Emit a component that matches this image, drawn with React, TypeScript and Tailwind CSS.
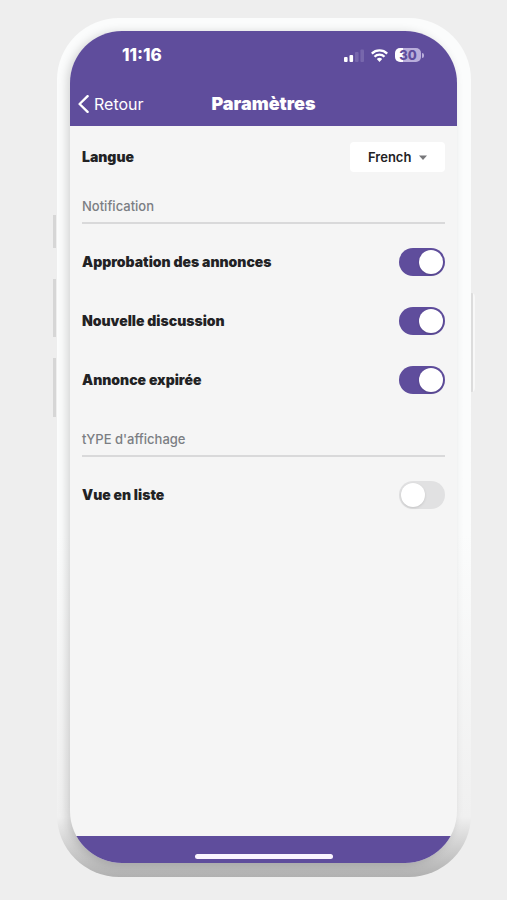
import { useState } from "react";

function StatusIcons() {
  return (
    <div className="flex items-center gap-[7px]" aria-label="Batterie 30">
      <svg width="20" height="13" viewBox="0 0 20 13" aria-hidden="true">
        <rect x="0" y="8" width="3.6" height="5" rx="1" fill="#fff" />
        <rect x="5.5" y="6" width="3.6" height="7" rx="1" fill="#fff" />
        <rect x="11" y="3" width="3.6" height="10" rx="1" fill="#7767ac" />
        <rect x="16.4" y="0.5" width="3.6" height="12.5" rx="1" fill="#7767ac" />
      </svg>
      <svg width="17" height="13" viewBox="0 0 17 13" aria-hidden="true">
        <g fill="none" stroke="#fff" strokeWidth="2.3">
          <path d="M0.8 4.6a11 11 0 0 1 15.4 0" />
          <path d="M3.5 7.7a7 7 0 0 1 10 0" />
        </g>
        <path d="M5.8 10.1a3.9 3.9 0 0 1 5.4 0L8.5 13z" fill="#fff" />
      </svg>
      <div className="flex items-center gap-px">
        <div className="flex h-[14px] w-[26px] items-center justify-center rounded-[5px] bg-linear-to-r from-white from-30% to-[#b9aedb] to-30% text-[13px] leading-[14px] font-extrabold text-[#5f4d9c]">
          30
        </div>
        <div className="h-[5px] w-[2px] rounded-r-full bg-[#b9aedb]" />
      </div>
    </div>
  );
}

function SectionHeading({ children }: { children: string }) {
  return (
    <h2 className="border-b-2 border-[#d9d9da] pb-[6px] text-[13px] leading-5 font-medium text-[#7b7e83]">
      {children}
    </h2>
  );
}

function ToggleRow({ id, label, initial }: { id: string; label: string; initial: boolean }) {
  const [on, setOn] = useState(initial);
  return (
    <div className="flex h-[59px] items-center justify-between">
      <label htmlFor={id} className="text-[14px] leading-5 font-black">
        {label}
      </label>
      <input
        id={id}
        type="checkbox"
        role="switch"
        checked={on}
        onChange={(e) => setOn(e.target.checked)}
        className="flex h-7 w-[46px] shrink-0 cursor-pointer appearance-none items-center rounded-full bg-[#e1e1e2] px-[2px] before:size-6 before:rounded-full before:bg-white before:shadow-sm checked:justify-end checked:bg-[#5f4d9c]"
      />
    </div>
  );
}

export default function App() {
  const [language, setLanguage] = useState("French");
  return (
    <div className="flex min-h-screen flex-col bg-[#eeeeee] pt-[18px] pr-9 pb-[23px] pl-[57px] font-['Inter','Liberation_Sans',sans-serif] text-[#222224]">
      <div className="relative flex flex-1 flex-col rounded-[62px] bg-linear-to-b from-[#fbfcfc] from-60% via-[#f0f0f0] via-93% to-[#b0b0b0] pt-[13px] pr-[14px] pb-[14px] pl-[13px]">
        <div className="absolute top-[197px] -left-1 h-[33px] w-[3px] bg-[#d6d6d6]" />
        <div className="absolute top-[261px] -left-1 h-[58px] w-[3px] bg-[#d6d6d6]" />
        <div className="absolute top-[340px] -left-1 h-[59px] w-[3px] bg-[#d6d6d6]" />
        <div className="absolute top-[275px] -right-1 h-[99px] w-1 rounded-r-sm border-r-2 border-l-2 border-r-[#f8f8f8] border-l-[#dcdcdc]" />

        <div className="flex flex-1 flex-col overflow-hidden rounded-[52px] bg-[#f5f5f5] shadow-[-3px_1px_10px_#00000028]">
          <header className="bg-[#5f4d9c] text-white">
            <div className="flex h-[50px] items-center justify-between pr-[33px] pb-[2px] pl-[52px]">
              <time className="text-[17px] leading-5 font-extrabold">11:16</time>
              <StatusIcons />
            </div>
            <div className="grid h-[45px] grid-cols-[1fr_auto_1fr] items-center px-2">
              <button type="button" className="flex items-center gap-[5px] justify-self-start text-[16px] leading-5">
                <svg width="11" height="18" viewBox="0 0 11 18" fill="none" stroke="#fff" strokeWidth="2.4" aria-hidden="true">
                  <path d="M9.6 1.2 1.6 9l8 7.8" strokeLinecap="round" strokeLinejoin="round" />
                </svg>
                Retour
              </button>
              <h1 className="text-[18px] leading-6 font-black">Paramètres</h1>
            </div>
          </header>

          <main className="flex-1 px-3 pt-4">
            <div className="flex items-center justify-between">
              <label htmlFor="language" className="text-[14px] leading-5 font-black">
                Langue
              </label>
              <div className="relative">
                <select
                  id="language"
                  value={language}
                  onChange={(e) => setLanguage(e.target.value)}
                  className="h-[30px] w-[95px] appearance-none rounded-[4px] bg-white pr-7 pl-[18px] text-[13px] leading-5 font-semibold"
                >
                  <option>French</option>
                  <option>English</option>
                </select>
                <svg className="pointer-events-none absolute top-[13px] right-[18px]" width="8" height="5" viewBox="0 0 8 5" aria-hidden="true">
                  <path d="M0 0.5h8L4 5z" fill="#77777a" />
                </svg>
              </div>
            </div>

            <section className="mt-6">
              <SectionHeading>Notification</SectionHeading>
              <div className="pt-2">
                <ToggleRow id="approval" label="Approbation des annonces" initial={true} />
                <ToggleRow id="discussion" label="Nouvelle discussion" initial={true} />
                <ToggleRow id="expired" label="Annonce expirée" initial={true} />
              </div>
            </section>

            <section className="mt-5">
              <SectionHeading>tYPE d'affichage</SectionHeading>
              <div className="pt-2">
                <ToggleRow id="list-view" label="Vue en liste" initial={false} />
              </div>
            </section>
          </main>

          <footer className="flex h-[27px] items-end justify-center bg-[#5f4d9c] pb-1">
            <div className="h-[5px] w-[138px] rounded-full bg-[#faf5ff]" />
          </footer>
        </div>
      </div>
    </div>
  );
}
